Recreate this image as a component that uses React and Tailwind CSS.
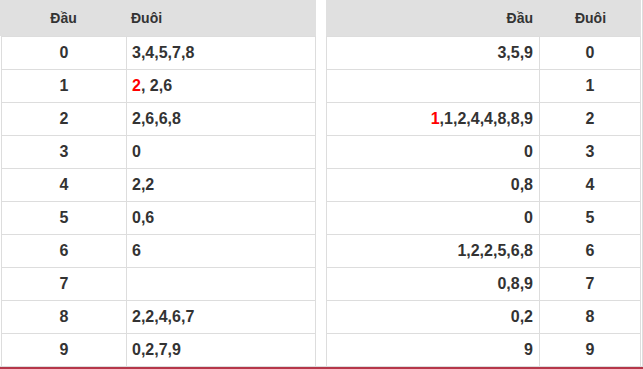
import React from "react";

const R = ({ children }) => <span className="text-[#ff0000]">{children}</span>;

const leftRows = [
  ["0", "3,4,5,7,8"],
  ["1", <><R>2</R>, 2,6</>],
  ["2", "2,6,6,8"],
  ["3", "0"],
  ["4", "2,2"],
  ["5", "0,6"],
  ["6", "6"],
  ["7", ""],
  ["8", "2,2,4,6,7"],
  ["9", "0,2,7,9"],
];

const rightRows = [
  ["3,5,9", "0"],
  ["", "1"],
  [<><R>1</R>,1,2,4,4,8,8,9</>, "2"],
  ["0", "3"],
  ["0,8", "4"],
  ["0", "5"],
  ["1,2,2,5,6,8", "6"],
  ["0,8,9", "7"],
  ["0,2", "8"],
  ["9", "9"],
];

export default function App() {
  return (
    <div className="w-[643px] h-[369px] bg-white font-['Liberation_Sans',Arial,sans-serif] font-bold text-[#333] overflow-hidden">
      <div className="flex h-[366px]">
        {/* Left table */}
        <div className="w-[316px] flex flex-col">
          <div className="h-[36px] bg-[#e0e0e0] flex items-center text-[14px]">
            <div className="w-[127px] text-center">Đầu</div>
            <div className="pl-[4px]">Đuôi</div>
          </div>
          {leftRows.map(([a, b], i) => (
            <div key={i} className="h-[33px] flex border-t border-[#ddd] ml-[1px] border-l border-r text-[16px]">
              <div className="w-[125px] flex items-center justify-center border-r border-[#ddd]">{a}</div>
              <div className="flex-1 flex items-center pl-[5px]">{b}</div>
            </div>
          ))}
        </div>
        <div className="w-[10px]" />
        {/* Right table */}
        <div className="w-[315px] flex flex-col">
          <div className="h-[36px] bg-[#e0e0e0] flex items-center text-[14px]">
            <div className="w-[214px] text-right pr-[7px]">Đầu</div>
            <div className="flex-1 text-center">Đuôi</div>
          </div>
          {rightRows.map(([a, b], i) => (
            <div key={i} className="h-[33px] flex border-t border-l border-r border-[#ddd] text-[16px]">
              <div className="w-[213px] flex items-center justify-end pr-[6px] border-r border-[#ddd]">{a}</div>
              <div className="flex-1 flex items-center justify-center">{b}</div>
            </div>
          ))}
        </div>
        <div className="w-[1px]" />
        <div className="w-[1px] bg-[#ddd]" />
      </div>
      <div className="h-[1px] bg-[#ddd]" />
      <div className="h-[2px] bg-[#b5374a]" />
    </div>
  );
}
